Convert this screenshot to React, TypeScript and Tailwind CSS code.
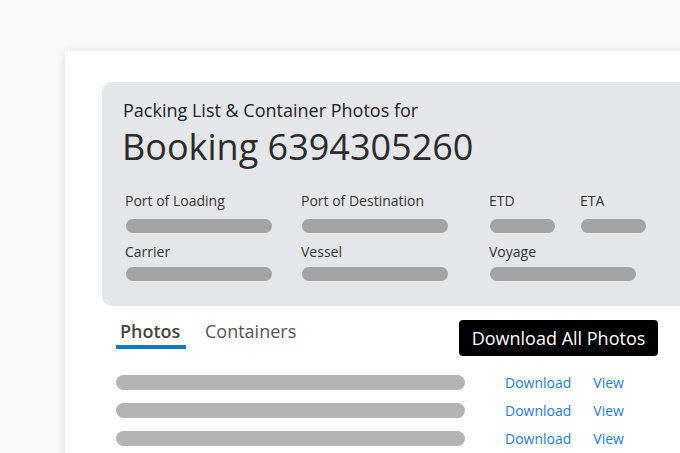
const fields = [
  { label: "Port of Loading", bar: "w-[146px]", span: "", row: 0 },
  { label: "Port of Destination", bar: "w-[146px]", span: "", row: 0 },
  { label: "ETD", bar: "w-[65px]", span: "", row: 0 },
  { label: "ETA", bar: "w-[65px]", span: "", row: 0 },
  { label: "Carrier", bar: "w-[146px]", span: "", row: 1 },
  { label: "Vessel", bar: "w-[146px]", span: "", row: 1 },
  { label: "Voyage", bar: "w-[146px]", span: "col-span-2", row: 1 },
];

const Field = ({ label, bar, span, row }: { label: string; bar: string; span: string; row: number }) => (
  <div className={`flex flex-col ${span}`}>
    <span className="text-[14px] leading-[20px] text-[#333] pl-[2px]">{label}</span>
    <div className={`${row === 0 ? "mt-[8px]" : "mt-[5px]"} h-[14px] rounded-full bg-[#a3a3a3] ml-[3px] ${bar}`} />
  </div>
);

export default function App() {
  return (
    <div
      className="w-[680px] h-[453px] overflow-hidden bg-[#f9f9f9] pt-[51px] pl-[65px]"
      style={{ fontFamily: "'Open Sans', 'Liberation Sans', sans-serif" }}
    >
      <div className="w-[680px] h-[500px] bg-white shadow-[0_2px_10px_rgba(0,0,0,0.13)] pt-[31px] pl-[37px]">
        <section className="w-[620px] rounded-[10px] bg-[#e5e6ea] pt-[16px] pb-[25px] pl-[21px]">
          <p className="text-[18px] leading-[24px] text-[#222]">Packing List &amp; Container Photos for</p>
          <h1 className="text-[36px] leading-[42px] mt-[4px] text-[#2b2b2b] -ml-[1px]">Booking 6394305260</h1>
          <div className="mt-[23px] grid grid-cols-[176px_188px_91px_91px] gap-y-[9px]">
            {fields.map((f) => (
              <Field key={f.label} {...f} />
            ))}
          </div>
        </section>

        <div className="pl-[14px]">
          <div className="flex items-start mt-[13px] w-[542px] justify-between">
            <div className="flex gap-[19px]">
              <div className="flex flex-col w-[70px]">
                <span className="pl-[4px] text-[18px] leading-[24px] font-semibold text-[#444]">Photos</span>
                <div className="mt-[2px] h-[4px] bg-[#1478c8]" />
              </div>
              <span className="text-[18px] leading-[24px] text-[#555]">Containers</span>
            </div>
            <button className="h-[36px] w-[199px] mt-[1px] rounded-[4px] bg-black text-white text-[18px] leading-none">
              Download All Photos
            </button>
          </div>

          <div className="mt-[19px] flex flex-col gap-[13px]">
            {[0, 1, 2].map((i) => (
              <div key={i} className="flex items-center h-[15px]">
                <div className="h-[15px] w-[349px] rounded-full bg-[#b3b3b3]" />
                <a className="ml-[40px] text-[14px] leading-[20px] text-[#1f7bcf]">Download</a>
                <a className="ml-[22px] text-[14px] leading-[20px] text-[#1f7bcf]">View</a>
              </div>
            ))}
          </div>
        </div>
      </div>
    </div>
  );
}
